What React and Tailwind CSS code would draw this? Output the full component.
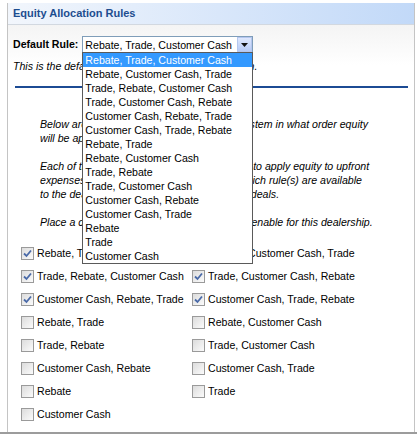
const rules = [
  "Rebate, Trade, Customer Cash",
  "Rebate, Customer Cash, Trade",
  "Trade, Rebate, Customer Cash",
  "Trade, Customer Cash, Rebate",
  "Customer Cash, Rebate, Trade",
  "Customer Cash, Trade, Rebate",
  "Rebate, Trade",
  "Rebate, Customer Cash",
  "Trade, Rebate",
  "Trade, Customer Cash",
  "Customer Cash, Rebate",
  "Customer Cash, Trade",
  "Rebate",
  "Trade",
  "Customer Cash",
];

function Checkbox({ checked }) {
  return (
    <span className="w-[13px] h-[13px] shrink-0 border border-[#9a9a9a] bg-gradient-to-br from-[#dcdcdc] to-[#fbfbfb] flex items-center justify-center">
      {checked && (
        <svg width="9" height="9" viewBox="0 0 9 9">
          <path d="M1 4.5 L3.5 7 L8 1.5" fill="none" stroke="#4a6aa8" strokeWidth="1.8" />
        </svg>
      )}
    </span>
  );
}

export default function App() {
  return (
    <div className="w-[417px] h-[434px] bg-white relative overflow-hidden font-['Liberation_Sans',Arial,sans-serif] text-[10.6px] text-black">
      <div className="ml-[7px] mr-[2px] mt-[3px] h-[429px] border-x border-[#c4c4c4] flex flex-col">
        <div className="h-[22px] shrink-0 bg-gradient-to-r from-[#f2f6fc] to-[#c2d9f8] border-b border-[#d2d8e0] px-[5px] flex items-center font-bold text-[11px] text-[#1d4d8f]">
          Equity Allocation Rules
        </div>

        <div className="flex-1 bg-gradient-to-b from-[#f4f4f4] to-white to-[40px] px-[5px] pt-[11px]">
          <div className="flex items-center h-[17px]">
            <span className="font-bold mr-[4px]">Default Rule:</span>
            <div className="relative w-[171px] h-[17px] border border-[#7f9db9] bg-white flex items-center">
              <span className="pl-[2px] flex-1 leading-[14px]">Rebate, Trade, Customer Cash</span>
              <span className="w-[15px] h-[15px] bg-gradient-to-b from-[#dfe8fd] to-[#b7cbf6] border border-[#b5c7ef] flex items-center justify-center">
                <svg width="7" height="4" viewBox="0 0 7 4">
                  <path d="M0 0 L7 0 L3.5 4 Z" fill="#111" />
                </svg>
              </span>
              <div className="absolute left-[-1px] top-[15px] w-[171px] border border-[#5a5a5a] bg-white z-10">
                {rules.map((r, i) => (
                  <div
                    key={r}
                    className={
                      "h-[14px] leading-[14px] pl-[2px] " +
                      (i === 0 ? "bg-[#3399ff] text-white" : "")
                    }
                  >
                    {r}
                  </div>
                ))}
              </div>
            </div>
          </div>

          <p className="italic mt-[6px] leading-[14px]">
            This is the default rule used for every deal selection.
          </p>

          <div className="h-[2px] bg-[#1c4b94] mt-[13px] ml-[2px] mr-[1px]" />

          <div className="pl-[27px] pr-[10px] mt-[29px] italic leading-[14px]">
            <p>
              Below are the different rules which tell the system in what order equity
              <br />
              will be applied to the deal.
            </p>
            <p className="mt-[14px]">
              Each of these rules represents a distinct way to apply equity to upfront
              <br />
              expenses. You can then simply determine which rule(s) are available
              <br />
              to the dealership when structuring all of their deals.
            </p>
            <p className="mt-[14px]">
              Place a check next to the rule(s) you want to enable for this dealership.
            </p>
          </div>

          <div className="grid grid-cols-[171px_auto] pl-[8px] mt-[13px]">
            {rules.map((r, i) => (
              <div key={r} className="h-[23px] flex items-center">
                <Checkbox checked={i < 6} />
                <span className="ml-[3px]">{r}</span>
              </div>
            ))}
          </div>
        </div>
      </div>
      <div className="h-[2px] bg-[#9c9c9c]" />
    </div>
  );
}
